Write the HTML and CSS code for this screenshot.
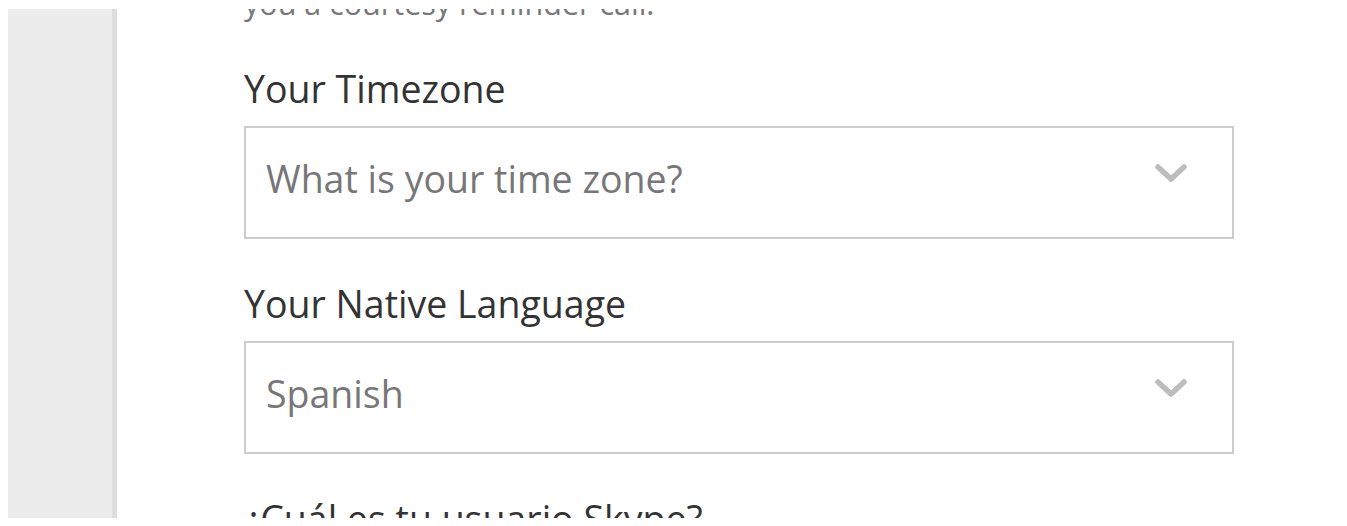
FILE: index.html
```html
<!DOCTYPE html>
<html lang="en">
<head>
<meta charset="utf-8">
<title>Form</title>
<link rel="stylesheet" href="styles.css">
</head>
<body>
<div class="frame">
  <aside class="sidebar"></aside>
  <main class="main">
    <p class="intro">you a courtesy reminder call.</p>
    <div class="field">
      <label class="label">Your Timezone</label>
      <div class="select">
        <span class="placeholder">What is your time zone?</span>
        <svg class="chevron" width="34" height="22" viewBox="0 0 34 22"><polyline points="4,4 17,16 30,4" fill="none" stroke="#bdbdbd" stroke-width="5.5" stroke-linecap="round" stroke-linejoin="round"/></svg>
      </div>
    </div>
    <div class="field">
      <label class="label">Your Native Language</label>
      <div class="select">
        <span class="placeholder">Spanish</span>
        <svg class="chevron" width="34" height="22" viewBox="0 0 34 22"><polyline points="4,4 17,16 30,4" fill="none" stroke="#bdbdbd" stroke-width="5.5" stroke-linecap="round" stroke-linejoin="round"/></svg>
      </div>
    </div>
    <div class="field">
      <label class="label">¿Cuál es tu usuario Skype?</label>
    </div>
  </main>
</div>
</body>
</html>
```
FILE: styles.css
```css
html, body {
  background: #ffffff;
}
body {
  margin: 9px 8px 8px 8px;
  font-family: "Open Sans", "Noto Sans", sans-serif;
}
.frame {
  display: flex;
  height: 509px;
  overflow: hidden;
  background: #ffffff;
  box-shadow: 0 0 9px 1px rgba(0, 0, 0, 0.3);
}
.sidebar {
  width: 104px;
  flex: none;
  background: #ececec;
  border-right: 5px solid #dddddd;
}
.main {
  flex: 1;
  padding: 0 105px 0 127px;
  min-width: 0;
}
.intro {
  margin: -28px 0 0 0;
  font-size: 30.5px;
  line-height: 44px;
  color: #777777;
}
.field {
  margin-top: 42px;
}
.field + .field {
  margin-top: 43px;
}
.label {
  display: block;
  font-size: 37.5px;
  line-height: 44px;
  color: #333333;
  margin-bottom: 15px;
}
.select {
  display: flex;
  align-items: center;
  justify-content: space-between;
  height: 113px;
  box-sizing: border-box;
  border: 2px solid #cccccc;
  padding: 0 44px 8px 20px;
}
.placeholder {
  font-size: 37.5px;
  color: #777777;
  line-height: 44px;
}
.chevron {
  display: block;
  flex: none;
  margin-bottom: 9px;
}
```
